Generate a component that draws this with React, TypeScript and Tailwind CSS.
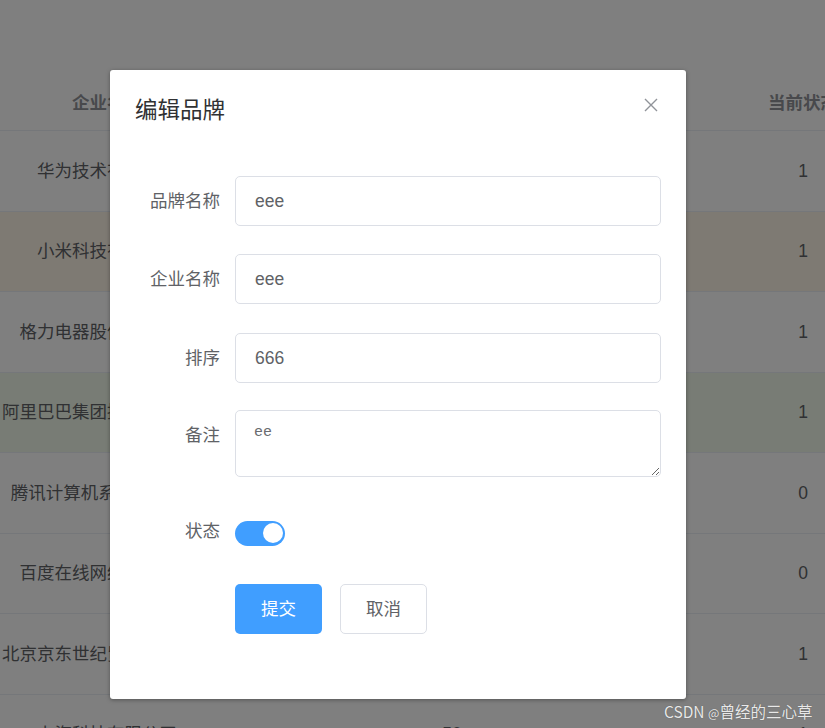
import React from "react";

const rows = [
  { name: "华为技术有限公司", sort: "", status: "1", bg: "bg-white" },
  { name: "小米科技有限公司", sort: "", status: "1", bg: "bg-[#fdf5e6]" },
  { name: "格力电器股份有限公司", sort: "", status: "1", bg: "bg-white" },
  { name: "阿里巴巴集团控股有限公司", sort: "", status: "1", bg: "bg-[#f0f9eb]" },
  { name: "腾讯计算机系统有限公司", sort: "", status: "0", bg: "bg-white" },
  { name: "百度在线网络技术公司", sort: "", status: "0", bg: "bg-white" },
  { name: "北京京东世纪贸易有限公司", sort: "", status: "1", bg: "bg-white" },
  { name: "上海科技有限公司", sort: "50", status: "1", bg: "bg-white" },
];

const FONT = "font-['Liberation_Sans','Noto_Sans_CJK_SC',sans-serif]";

export default function App() {
  return (
    <div className={`relative w-[825px] h-[728px] overflow-hidden bg-white ${FONT}`}>
      {/* background table */}
      <div className="w-[916px] pt-[76px]">
        <div className="flex h-[55px] items-center border-b border-[#ebeef5] text-[17.5px] font-bold text-[#909399]">
          <div className="w-[214px] text-center">企业名称</div>
          <div className="w-[476px] text-center">排序</div>
          <div className="w-[226px] text-center">当前状态</div>
        </div>
        {rows.map((r, i) => (
          <div
            key={i}
            className={`flex h-[80.5px] items-center border-b border-[#ebeef5] text-[17.5px] text-[#606266] ${r.bg}`}
          >
            <div className="w-[214px] whitespace-nowrap text-center">{r.name}</div>
            <div className="w-[476px] text-center">{r.sort}</div>
            <div className="w-[226px] text-center">{r.status}</div>
          </div>
        ))}
      </div>

      {/* overlay */}
      <div className="absolute inset-0 bg-black/50" />

      {/* dialog */}
      <div className="absolute left-[110px] top-[70px] w-[576px] h-[629px] rounded-[3px] bg-white shadow-[0_1px_4px_rgba(0,0,0,0.35)]">
        <div className="relative px-[25px] pt-[26px] pb-[11px]">
          <div className="h-[30px] text-[22.5px] leading-[30px] text-[#303133]">编辑品牌</div>
          <button className="absolute right-[25px] top-[25px] flex h-[20px] w-[20px] items-center justify-center">
            <svg width="14" height="14" viewBox="0 0 14 14" fill="none" stroke="#909399" strokeWidth="1.4">
              <path d="M1 1 L13 13 M13 1 L1 13" />
            </svg>
          </button>
        </div>
        <div className="px-[25px] pt-[39px]">
          {[
            { label: "品牌名称", value: "eee", mb: "mb-[28px]" },
            { label: "企业名称", value: "eee", mb: "mb-[29px]" },
            { label: "排序", value: "666", mb: "mb-[27px]" },
          ].map((f, i) => (
            <div key={i} className={`${f.mb} flex`}>
              <div className="w-[100px] shrink-0 pr-[15px] text-right text-[17.5px] leading-[50px] text-[#606266]">
                {f.label}
              </div>
              <div className="flex h-[50px] flex-1 items-center rounded-[5px] border border-[#dcdfe6] px-[19px] text-[17.5px] text-[#606266]">
                {f.value}
              </div>
            </div>
          ))}
          <div className="mb-[29px] flex">
            <div className="w-[100px] shrink-0 pr-[15px] text-right text-[17.5px] leading-[50px] text-[#606266]">
              备注
            </div>
            <textarea
              readOnly
              defaultValue="ee"
              className="block h-[67px] flex-1 rounded-[5px] border border-[#dcdfe6] px-[18px] pt-[9px] font-['Liberation_Mono',monospace] text-[15px] leading-[25px] text-[#6a6c70] outline-none"
            />
          </div>
          <div className="mb-[28px] flex">
            <div className="w-[100px] shrink-0 pr-[15px] text-right text-[17.5px] leading-[50px] text-[#606266]">
              状态
            </div>
            <div className="flex h-[50px] items-center">
              <div className="relative mt-[4px] h-[25px] w-[50px] rounded-full bg-[#409eff]">
                <div className="absolute right-[2.5px] top-[2.5px] h-[20px] w-[20px] rounded-full bg-white" />
              </div>
            </div>
          </div>
          <div className="flex pl-[100px] gap-[18px]">
            <button className="h-[50px] w-[87px] rounded-[5px] bg-[#409eff] text-[17.5px] text-white">提交</button>
            <button className="h-[50px] w-[87px] rounded-[5px] border border-[#dcdfe6] bg-white text-[17.5px] text-[#606266]">
              取消
            </button>
          </div>
        </div>
      </div>

      {/* watermark */}
      <div className="absolute left-[664px] top-[699px] whitespace-nowrap font-['Noto_Sans_CJK_SC',sans-serif] text-[15.5px] leading-[24px] text-[#e8e8e8] [text-shadow:0_0_1px_rgba(0,0,0,0.4)]">
        CSDN <span className="text-[12px]">@</span>曾经的三心草
      </div>
    </div>
  );
}
